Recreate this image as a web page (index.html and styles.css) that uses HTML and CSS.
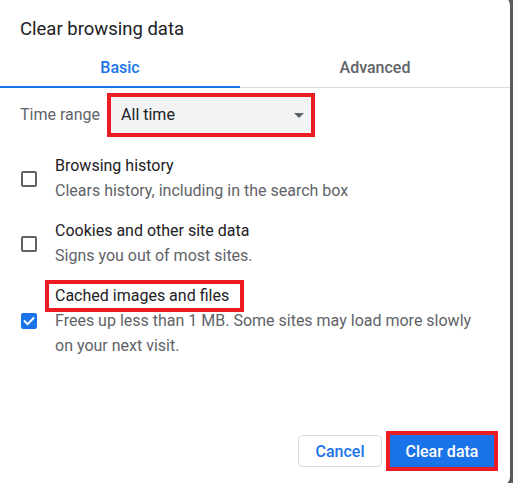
FILE: index.html
```html
<!DOCTYPE html>
<html lang="en">
<head>
<meta charset="utf-8">
<title>Clear browsing data</title>
<link rel="stylesheet" href="styles.css">
</head>
<body>
<div class="dialog">
  <h1 class="title">Clear browsing data</h1>
  <div class="tabs">
    <div class="tab tab-active">Basic</div>
    <div class="tab tab-rest">Advanced</div>
  </div>
  <div class="time-row">
    <span class="time-label">Time range</span>
    <div class="select">
      <span class="select-value">All time</span>
      <span class="select-arrow"></span>
    </div>
  </div>
  <div class="options">
    <div class="option">
      <span class="checkbox"></span>
      <div class="option-text">
        <div class="option-title">Browsing history</div>
        <div class="option-desc">Clears history, including in the search box</div>
      </div>
    </div>
    <div class="option">
      <span class="checkbox"></span>
      <div class="option-text">
        <div class="option-title">Cookies and other site data</div>
        <div class="option-desc">Signs you out of most sites.</div>
      </div>
    </div>
    <div class="option">
      <span class="checkbox checkbox-on">
        <svg viewBox="0 0 16 16" width="16" height="16"><path d="M3.6 8.2 L6.6 11.1 L12.4 5.2" fill="none" stroke="#fff" stroke-width="2" stroke-linecap="square"/></svg>
      </span>
      <div class="option-text">
        <div class="option-title"><span class="marked">Cached images and files</span></div>
        <div class="option-desc">Frees up less than 1 MB. Some sites may load more slowly on your next visit.</div>
      </div>
    </div>
  </div>
  <div class="footer">
    <button class="btn btn-cancel">Cancel</button>
    <button class="btn btn-primary">Clear data</button>
  </div>
</div>
</body>
</html>
```

FILE: styles.css
```css
html, body {
  margin: 0;
  padding: 0;
}
body {
  background: #5a5b5e;
  width: 513px;
  height: 483px;
  overflow: hidden;
  font-family: Roboto, "Liberation Sans", sans-serif;
  font-size: 16px;
  color: #202124;
}
.dialog {
  margin: -3px 0 0 -3px;
  width: 513px;
  height: 488px;
  background: #fff;
  border-radius: 8px;
  display: flex;
  flex-direction: column;
  box-sizing: border-box;
}
.title {
  margin: 0;
  padding: 20px 0 0 23px;
  font-size: 18.5px;
  font-weight: 400;
  line-height: 24px;
  color: #202124;
}
.tabs {
  display: flex;
  border-bottom: 1px solid #dadce0;
  margin-left: 3px;
}
.tab {
  padding: 17px 0 8px;
  line-height: 20px;
  font-size: 16px;
  font-weight: 500;
  text-align: center;
  border-bottom: 2px solid transparent;
  margin-bottom: -1px;
}
.tab-active {
  width: 240px;
  color: #1a73e8;
  border-bottom-color: #1a73e8;
}
.tab-rest {
  flex: 1;
  color: #5f6368;
}
.time-row {
  display: flex;
  align-items: center;
  gap: 11px;
  padding: 9px 0 4px 23px;
}
.time-label {
  color: #5f6368;
  line-height: 24px;
}
.select {
  width: 200px;
  height: 36px;
  box-sizing: border-box;
  background: #f1f3f4;
  display: flex;
  align-items: center;
  padding: 0 7px 0 10px;
  outline: 4px solid #ed1c24;
}
.select-value {
  flex: 1;
  line-height: 36px;
  color: #202124;
}
.select-arrow {
  width: 0;
  height: 0;
  border-left: 5px solid transparent;
  border-right: 5px solid transparent;
  border-top: 5px solid #5f6368;
}
.options {
  display: flex;
  flex-direction: column;
  gap: 16px;
  padding: 17px 0 0 24px;
}
.option {
  display: flex;
  align-items: center;
  gap: 18px;
}
.checkbox {
  width: 16px;
  height: 16px;
  box-sizing: border-box;
  border: 2px solid #5f6368;
  border-radius: 2px;
  flex: none;
  position: relative;
}
.checkbox-on {
  background: #1a73e8;
  border-color: #1a73e8;
}
.checkbox-on svg {
  position: absolute;
  left: -2px;
  top: -2px;
}
.option-title {
  line-height: 24px;
  color: #202124;
}
.option-desc {
  line-height: 25px;
  color: #5f6368;
  width: 420px;
}
.marked {
  position: relative;
}
.marked::before {
  content: "";
  position: absolute;
  left: -10px;
  right: -15px;
  top: -6px;
  bottom: -7px;
  border: 4px solid #ed1c24;
}
.footer {
  margin-top: auto;
  display: flex;
  justify-content: flex-end;
  gap: 8px;
  padding: 0 16px 18px 0;
}
.btn {
  height: 32px;
  border-radius: 4px;
  font-family: Roboto, "Liberation Sans", sans-serif;
  font-size: 16px;
  font-weight: 500;
  padding: 0;
  cursor: pointer;
}
.btn-cancel {
  width: 84px;
  background: #fff;
  border: 1px solid #dadce0;
  color: #1a73e8;
}
.btn-primary {
  width: 104px;
  background: #1a73e8;
  border: none;
  color: #fff;
  outline: 4px solid #ed1c24;
  outline-offset: 0;
  border-radius: 0;
}
```
